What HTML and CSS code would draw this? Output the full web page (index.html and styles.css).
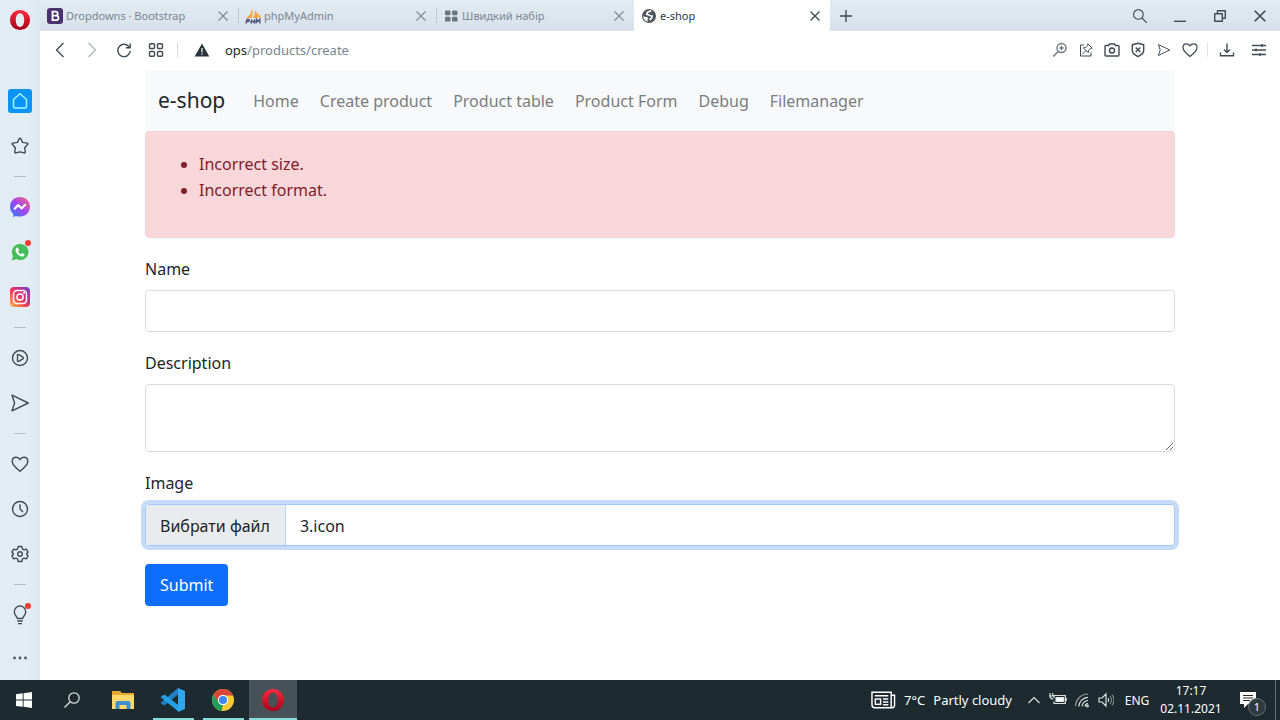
FILE: index.html
```html
<!DOCTYPE html>
<html lang="uk">
<head>
<meta charset="utf-8">
<meta name="viewport" content="width=device-width, initial-scale=1">
<title>e-shop</title>
<link rel="stylesheet" href="styles.css">
</head>
<body>
<svg class="defs" aria-hidden="true">
  <defs>
    <linearGradient id="operaRed" x1="0" y1="0" x2="0" y2="1"><stop offset="0" stop-color="#ff2b3c"/><stop offset="1" stop-color="#a7001c"/></linearGradient>
    <linearGradient id="messengerFill" x1="0" y1="1" x2="1" y2="0"><stop offset="0" stop-color="#2484ff"/><stop offset=".5" stop-color="#a345f5"/><stop offset="1" stop-color="#ff6a70"/></linearGradient>
    <linearGradient id="instaFill" x1="0" y1="1" x2="1" y2="0"><stop offset="0" stop-color="#ffc34d"/><stop offset=".4" stop-color="#f0424f"/><stop offset=".7" stop-color="#c42d91"/><stop offset="1" stop-color="#5b4fd6"/></linearGradient>
    <symbol id="close" viewBox="0 0 12 12"><path d="M1.500 1.500l9 9M10.500 1.500l-9 9"/></symbol>
    <symbol id="opera" viewBox="0 0 24 24"><path fill="url(#operaRed)" fill-rule="evenodd" d="M12 1a11 11 0 1 0 0 22a11 11 0 1 0 0-22zM12 4.500c3 0 4.600 3.300 4.600 7.500s-1.600 7.500-4.600 7.500s-4.600-3.300-4.600-7.500S9 4.500 12 4.500z"/></symbol>
    <symbol id="heart" viewBox="0 0 20 20"><path d="M10 17.300C5.500 13.800 2.200 11 2.200 7.300C2.200 4.800 4 3.200 6.100 3.200C7.800 3.200 9.200 4.100 10 5.600C10.800 4.100 12.200 3.200 13.900 3.200C16 3.200 17.800 4.800 17.800 7.300C17.800 11 14.500 13.800 10 17.300z"/></symbol>
    <symbol id="send" viewBox="0 0 20 20"><path d="M2 2.200L18.300 10L2 17.800L4.600 10z"/></symbol>
    <symbol id="magnifier" viewBox="0 0 20 20"><circle cx="8" cy="8" r="6"/><path d="M12.500 12.500l6 6"/></symbol>
  </defs>
</svg>

<div class="desktop">
  <div class="browser">
    <aside class="sidebar">
      <button class="logo" aria-label="Opera"><svg class="i22"><use href="#opera"/></svg></button>
      <nav class="side-items" aria-label="Sidebar">
        <button class="side-btn" aria-label="Home"><svg viewBox="0 0 24 24" class="i24"><rect width="24" height="24" rx="3" fill="#0a94f6"/><path d="M5.500 10.500L12 4.800l6.500 5.700v7a1.500 1.500 0 0 1-1.500 1.500H7a1.500 1.500 0 0 1-1.500-1.500z" fill="none" stroke="#a6f4ff" stroke-width="1.500"/></svg></button>
        <button class="side-btn" aria-label="Bookmarks"><svg viewBox="0 0 20 20" class="line i20"><path d="M10 2.200q.6 0 .9.700l1.700 3.500 4.500.7q1.300.3.500 1.400l-2.900 3.200.5 4.300q0 1.200-1.200.9L10 15.800l-4 1.100q-1.200.3-1.200-.9l.5-4.300-2.900-3.200q-.8-1.100.5-1.400l4.500-.7 1.700-3.500q.3-.7.9-.7z"/></svg></button>
        <hr class="side-sep">
        <button class="side-btn" aria-label="Messenger"><svg viewBox="0 0 20 20" class="i20"><path fill="url(#messengerFill)" d="M10 0C4.300 0 0 4.100 0 9.700c0 3 1.200 5.500 3.200 7.200L3.300 20l2.700-1.100c1.200.4 2.600.6 4 .6c5.700 0 10-4.100 10-9.800S15.700 0 10 0z"/><path fill="none" stroke="#fff" stroke-width="2.200" d="M4.200 12.300L8 8.200l3.600 3 4.200-4"/></svg></button>
        <button class="side-btn badge" aria-label="WhatsApp"><svg viewBox="0 0 20 20" class="i20"><path fill="#42bd58" d="M10 2a8 8 0 0 0-7 12l-1.200 4.600L6.600 17A8 8 0 1 0 10 2z"/><path fill="#fff" d="M6.500 5.800l1.400-.3 1.200 2.700-1 1.200c.7 1.300 1.600 2.200 2.900 2.800l1.100-1.200 2.500 1.200c0 2.200-1.900 2.700-3.300 2.300C8.400 13.600 6 11 5.500 8.400c0-1.300.4-2.100 1-2.600z"/></svg></button>
        <button class="side-btn" aria-label="Instagram"><svg viewBox="0 0 20 20" class="i20"><rect width="20" height="20" rx="4" fill="url(#instaFill)"/><g fill="none" stroke="#fff" stroke-width="1.500"><rect x="3.500" y="3.500" width="13" height="13" rx="3.500"/><circle cx="10" cy="10" r="3.100"/></g><circle cx="14" cy="6" r="1" fill="#fff"/></svg></button>
        <hr class="side-sep">
        <button class="side-btn" aria-label="Player"><svg viewBox="0 0 20 20" class="line i20"><circle cx="10" cy="10" r="7.500"/><path d="M7.500 6.600h1.300L13.200 9.300v1.400L8.800 13.400H7.500z"/></svg></button>
        <button class="side-btn" aria-label="My Flow"><svg class="line i20"><use href="#send"/></svg></button>
        <hr class="side-sep">
        <button class="side-btn" aria-label="Favourites"><svg class="line i20"><use href="#heart"/></svg></button>
        <button class="side-btn" aria-label="History"><svg viewBox="0 0 20 20" class="line i20"><circle cx="10" cy="10" r="7.500"/><path d="M10 5.200V10l3 3"/></svg></button>
        <button class="side-btn" aria-label="Settings"><svg viewBox="0 0 20 20" class="line i20"><path d="M8.200 2.500h3.600l.6 2.400 1.500.9 2.400-.7 1.800 3-1.700 1.800 1.700 1.900-1.800 3-2.400-.7-1.500.9-.6 2.500H8.200L7.600 15l-1.500-.9-2.400.7-1.800-3 1.700-1.900L1.900 8.100l1.800-3 2.400.7 1.500-.9z"/><circle cx="10" cy="10" r="2.300"/></svg></button>
        <hr class="side-sep">
        <button class="side-btn badge" aria-label="Tips"><svg viewBox="0 0 20 20" class="line i20"><path d="M7.300 13.500C7.300 11.500 4.300 10.500 4.300 6.700a5.700 5.700 0 0 1 11.400 0c0 3.800-3 4.800-3 6.800zM7.300 16h5.400M8 18.600h4"/></svg></button>
        <button class="side-btn more" aria-label="More"><svg viewBox="0 0 20 20" class="i20" fill="#4c555c"><circle cx="4.500" cy="10" r="1.400"/><circle cx="10" cy="10" r="1.400"/><circle cx="15.500" cy="10" r="1.400"/></svg></button>
      </nav>
    </aside>

    <div class="window">
      <header class="tabbar">
        <div class="tab">
          <svg viewBox="0 0 16 16" class="i16"><rect width="16" height="16" rx="3" fill="#4b3070"/><path fill="none" stroke="#fff" stroke-width="1.800" d="M5.500 3.700h3.200a2 2 0 0 1 0 4H5.500zM5.500 7.700h3.700a2.200 2.200 0 0 1 0 4.500H5.500z"/></svg>
          <span class="tab-title">Dropdowns · Bootstrap</span>
          <button class="tab-close" aria-label="Close tab"><svg class="line i12"><use href="#close"/></svg></button>
        </div>
        <div class="tab">
          <svg viewBox="0 0 16 16" class="i16"><path fill="#f5a338" d="M6.500 0C7 4 5.500 7 1.500 10h5C8 6 8 3 6.500 0zM9.500 2c2.500 2 4 5 4 8H7.800c2-2.500 2.500-5 1.700-8zM13 5c1.700 1.500 2.500 3 2.800 5h-1.600z"/><path fill="none" stroke="#4c5279" stroke-width="1.400" d="M1 15.500l1-4h2q1 1.200-.5 2h-2M6 15.500l.8-4M9 15.500l.8-4M6.500 13.500h3M11 15.500l.5-4 1.300 2 2-2v4"/></svg>
          <span class="tab-title">phpMyAdmin</span>
          <button class="tab-close" aria-label="Close tab"><svg class="line i12"><use href="#close"/></svg></button>
        </div>
        <div class="tab">
          <svg viewBox="0 0 16 16" class="i16" fill="#6b757d"><rect x="2" y="2.500" width="5.500" height="4.800" rx="1.200"/><rect x="9" y="2.500" width="5.500" height="4.800" rx="1.200"/><rect x="2" y="8.800" width="5.500" height="4.800" rx="1.200"/><rect x="9" y="8.800" width="5.500" height="4.800" rx="1.200"/></svg>
          <span class="tab-title">Швидкий набір</span>
          <button class="tab-close" aria-label="Close tab"><svg class="line i12"><use href="#close"/></svg></button>
        </div>
        <div class="tab active">
          <svg viewBox="0 0 16 16" class="i16"><circle cx="8" cy="8" r="7" fill="#50565b"/><path fill="none" stroke="#fff" stroke-width="1.700" stroke-linejoin="round" d="M10.200 2.800L6.500 4.300 5.700 6.300 9 7.500l2 .3-.3 2.200-2.200 1.800"/><path fill="#fff" d="M2 8.500l4 .4 1.300 1.300-.8 1.300v2.200C4.200 13 2.400 11 2 8.500z"/></svg>
          <span class="tab-title">e-shop</span>
          <button class="tab-close" aria-label="Close tab"><svg class="line i12"><use href="#close"/></svg></button>
        </div>
        <button class="new-tab" aria-label="New tab"><svg viewBox="0 0 12 12" class="line i12"><path d="M6 0v12M0 6h12"/></svg></button>
        <div class="window-controls">
          <button aria-label="Search tabs"><svg class="line i16"><use href="#magnifier"/></svg></button>
          <button aria-label="Minimize"><svg viewBox="0 0 12 12" class="line i12"><path d="M0 11.300h12"/></svg></button>
          <button aria-label="Restore"><svg viewBox="0 0 12 12" class="line i12"><path d="M.7 3.700h7.600v7.600H.7zM3.500 3.500V.7h7.800v7.600H8.500"/></svg></button>
          <button aria-label="Close"><svg class="line i14"><use href="#close"/></svg></button>
        </div>
      </header>

      <div class="addressbar">
        <div class="nav-buttons">
          <button aria-label="Back"><svg viewBox="0 0 16 16" class="line i16"><path d="M11.500 1L4.500 8l7 7"/></svg></button>
          <button aria-label="Forward" disabled><svg viewBox="0 0 16 16" class="line i16"><path d="M4.500 1l7 7-7 7"/></svg></button>
          <button aria-label="Reload"><svg viewBox="0 0 16 16" class="line i16"><path d="M13.500 5.500A6.200 6.200 0 1 0 14.200 9M14.200 1.500v4.300H9.800"/></svg></button>
          <button aria-label="Speed Dial"><svg viewBox="0 0 16 16" class="line i16"><rect x="1.500" y="1.700" width="5" height="4.800" rx="1"/><rect x="9.500" y="1.700" width="5" height="4.800" rx="1"/><rect x="1.500" y="9.500" width="5" height="4.800" rx="1"/><rect x="9.500" y="9.500" width="5" height="4.800" rx="1"/></svg></button>
        </div>
        <button class="warn" aria-label="Not secure"><svg viewBox="0 0 16 16" class="i16"><path fill="#28323a" d="M8 1.500L15.300 14.500H.7z"/><path stroke="#fff" stroke-width="1.200" d="M8 6v4.500M8 11.500v1.300"/></svg></button>
        <div class="url">ops<span>/products/create</span></div>
        <div class="page-actions">
          <button aria-label="Zoom"><svg viewBox="0 0 16 16" class="line i16 faint"><circle cx="9.500" cy="6" r="4.500"/><path d="M6.300 9.300L1.300 14.500M7.300 6h4.400M9.500 3.800v4.400"/></svg></button>
          <button aria-label="Edit page"><svg viewBox="0 0 16 16" class="line thin i16"><path d="M6 3H2.500v11H13v-3.500M4.500 12L8 8.500M9.800 1.800l4.400 4.400-1.700.1-2 2-.3 2.400-4.900-4.900 2.400-.3 2-2z"/></svg></button>
          <button aria-label="Snapshot"><svg viewBox="0 0 16 16" class="line i16"><path d="M1 4.500q0-1 1-1h2.500L5.500 2h5l1 1.500H14q1 0 1 1V13q0 1-1 1H2q-1 0-1-1z"/><circle cx="8" cy="8.500" r="2.500"/></svg></button>
          <button aria-label="Ad blocker"><svg viewBox="0 0 16 16" class="line i16"><path d="M8 1.300l5.700 1.500v5.700q0 3.500-5.700 6q-5.700-2.500-5.700-6V2.800zM5.700 5.500l4.600 4.600M10.300 5.500l-4.600 4.600"/></svg></button>
          <button aria-label="Send to My Flow"><svg class="line i14"><use href="#send"/></svg></button>
          <button aria-label="Save to bookmarks"><svg class="line i18"><use href="#heart"/></svg></button>
        </div>
        <div class="menu-actions">
          <button aria-label="Downloads"><svg viewBox="0 0 16 16" class="line i16"><path d="M8 1.500v8.800M5 7.500l3 3 3-3M1.500 10.500v3.300h13v-3.300"/></svg></button>
          <button aria-label="Easy setup"><svg viewBox="0 0 16 16" class="line i16"><path d="M1 3.500h14M1 8h14M1 12.500h14M11 2v3M5 6.500v3M9 11v3"/></svg></button>
        </div>
      </div>

      <main class="page">
        <nav class="navbar">
          <a class="brand" href="#">e-shop</a>
          <a href="#">Home</a>
          <a href="#">Create product</a>
          <a href="#">Product table</a>
          <a href="#">Product Form</a>
          <a href="#">Debug</a>
          <a href="#">Filemanager</a>
        </nav>
        <div class="alert" role="alert">
          <ul>
            <li>Incorrect size.</li>
            <li>Incorrect format.</li>
          </ul>
        </div>
        <form class="form">
          <div class="field">
            <label for="name">Name</label>
            <input class="control" id="name" type="text">
          </div>
          <div class="field">
            <label for="description">Description</label>
            <textarea class="control" id="description"></textarea>
          </div>
          <div class="field">
            <label for="image">Image</label>
            <input class="file-native" id="image" type="file">
            <label class="file-control" for="image"><span class="file-button">Вибрати файл</span><span class="file-name">3.icon</span></label>
          </div>
          <button class="submit" type="submit">Submit</button>
        </form>
      </main>
    </div>
  </div>

  <footer class="taskbar">
    <button class="task" aria-label="Start"><svg viewBox="0 0 16 16" class="i16" fill="#fff"><path d="M0 2.200L6.700 1.300v6.300H0zM7.600 1.200L16 0v7.600H7.600zM0 8.500h6.700v6.300L0 13.900zM7.600 8.500H16V16l-8.400-1.200z"/></svg></button>
    <button class="task" aria-label="Search"><svg viewBox="0 0 16 16" class="i16" fill="none" stroke="#d5dadc" stroke-width="1.300"><circle cx="10" cy="6" r="5.200"/><path d="M6.200 9.800L.5 15.500"/></svg></button>
    <div class="pinned">
      <button class="task" aria-label="File Explorer"><svg viewBox="0 0 24 24" class="i24"><path fill="#e5a92f" d="M1 3h8l2 2h12v3H1z"/><path fill="#ffd96b" d="M1 7h22v14H1z"/><path fill="#3d91d1" d="M4.500 21v-6q0-2 2-2h11q2 0 2 2v6h-4v-4h-7v4z"/></svg></button>
      <button class="task open" aria-label="Visual Studio Code"><svg viewBox="0 0 24 24" class="i24"><path fill="#1e7fc5" d="M17 0v6.500L3.500 17.500 0 15.500v-1L17 0z"/><path fill="#259fe8" d="M0 8.500l3.500-2L18 17.500V24L0 9.500z"/><path fill="#2fa7ee" d="M17 0l7 3v18l-7 3z"/></svg></button>
      <button class="task open" aria-label="Chrome"><svg viewBox="0 0 24 24" class="i24"><circle cx="12" cy="12" r="11" fill="#f8c931"/><path fill="#dc4437" d="M2.500 6.500a11 11 0 0 1 19 0l.5 1H12L7.500 14.500z"/><path fill="#249d58" d="M2.500 6.500L7.700 14.500 12 17l-1.500 6A11 11 0 0 1 2.500 6.500z"/><circle cx="12" cy="12" r="5.200" fill="#fff"/><circle cx="12" cy="12" r="4.100" fill="#4286f4"/></svg></button>
      <button class="task open current" aria-label="Opera"><svg class="i24"><use href="#opera"/></svg></button>
    </div>
    <div class="tray">
      <button class="weather"><svg viewBox="0 0 26 18" class="news" fill="none" stroke="#fff" stroke-width="1.500"><path d="M1 1h20v16H4q-3 0-3-3zM21 4h3.500v10.500q0 2.500-2.500 2.500h-1M4 4.500h14M12.500 8h5.500M12.500 11h5.500M12.500 14h5.500"/><rect x="4.500" y="8" width="5.500" height="5.500"/></svg><span>7°C</span><span>Partly cloudy</span></button>
      <div class="tray-icons">
        <button aria-label="Hidden icons"><svg viewBox="0 0 16 16" class="i16 tray-line"><path d="M2.500 11L8 5.500l5.500 5.500"/></svg></button>
        <button aria-label="Battery"><svg viewBox="0 0 18 16" class="i18 tray-line"><path d="M5 6V3.500h11.300v8H5V9.500M17.200 6v3M0 4h4.500M1 1v3M3.700 1v3M1 4q0 3 3.500 3"/><path fill="#fff" d="M7 5.500h7.500v4H7z"/></svg></button>
        <button aria-label="Network"><svg viewBox="0 0 16 16" class="i16 tray-line"><path opacity=".65" d="M1.500 14A12.500 12.500 0 0 1 14 2"/><path d="M4.800 14.500A9.500 9.500 0 0 1 14 5.300M8 14.500a6.200 6.200 0 0 1 6-6M11 14.500a3.200 3.200 0 0 1 3-3"/><circle cx="13.500" cy="14" r=".8"/></svg></button>
        <button aria-label="Volume"><svg viewBox="0 0 16 16" class="i16 tray-line"><path d="M1 6h3l4-4v12l-4-4H1zM10 6q1.500 2 0 4"/><path opacity=".5" d="M12 4q3 4 0 8M14 2.500q4 5.500 0 11"/></svg></button>
      </div>
      <button class="lang">ENG</button>
      <button class="clock"><span>17:17</span><span>02.11.2021</span></button>
      <button class="notices" aria-label="Notifications"><svg viewBox="0 0 18 18" class="i18"><path fill="#fff" d="M1 1h16v12H9l-4 4v-4H1z"/><path stroke="#1d2a2f" stroke-width="1.200" d="M4 4.500h10M4 7h10M4 9.500h7"/></svg><span class="count">1</span></button>
    </div>
  </footer>
</div>
</body>
</html>
```

FILE: styles.css
```css
* { box-sizing: border-box; }
body {
  margin: 0;
  font-family: "Noto Sans", "Open Sans", sans-serif;
  font-size: 12px;
  color: #212529;
  background: #fff;
}
button {
  font: inherit;
  color: inherit;
  background: none;
  border: 0;
  padding: 0;
  display: flex;
  align-items: center;
  justify-content: center;
}
svg { display: block; flex: none; }
.defs { position: absolute; width: 0; height: 0; }
.i12 { width: 12px; height: 12px; }
.i14 { width: 14px; height: 14px; }
.i16 { width: 16px; height: 16px; }
.i18 { width: 18px; height: 18px; }
.i20 { width: 20px; height: 20px; }
.i22 { width: 22px; height: 22px; }
.i24 { width: 24px; height: 24px; }
.line { fill: none; stroke: #414b53; stroke-width: 1.4; stroke-linejoin: round; }
.thin { stroke-width: 1; }

.desktop { min-height: 100vh; display: flex; flex-direction: column; }
.browser { flex: 1; display: flex; }

.sidebar {
  width: 40px;
  flex: none;
  background: linear-gradient(90deg, #e2ecf3 70%, #dde6ee);
}
.logo { width: 100%; height: 40px; }
.side-items { padding-top: 38px; }
.side-btn { width: 100%; height: 45px; position: relative; }
.more { height: 42px; }
.side-sep {
  width: 12px;
  height: 1px;
  margin: 8px auto 7px;
  border: 0;
  background: #b4bec6;
}
.badge::after {
  content: "";
  position: absolute;
  right: 9px;
  top: 11px;
  width: 6px;
  height: 6px;
  border-radius: 50%;
  background: #ee3a34;
}

.window { flex: 1; min-width: 0; display: flex; flex-direction: column; }
.tabbar {
  height: 31px;
  display: flex;
  align-items: stretch;
  background: linear-gradient(#e2eaf2, #d8e0e9);
}
.tab {
  flex: 0 1 198px;
  min-width: 0;
  display: flex;
  align-items: center;
  gap: 3px;
  padding: 0 8px 0 7px;
  font-size: 11px;
  color: #7b8690;
}
.tab + .tab:not(.active) { background: linear-gradient(#c0c8d0, #c0c8d0) 0 50% / 1px 15px no-repeat; }
.tab-title { flex: 1; white-space: nowrap; overflow: hidden; }
.tab-close { width: 14px; height: 16px; }
.tab:not(.active) .line { stroke: #7e8991; stroke-width: 1.1; }
.tab.active { flex-basis: 196px; background: #fff; color: #30383e; }
.new-tab { width: 32px; }
.window-controls { margin-left: auto; display: flex; }
.window-controls button { width: 40px; }

.addressbar { height: 39px; padding-bottom: 1px; display: flex; align-items: center; }
.nav-buttons { display: flex; padding-left: 4px; }
.nav-buttons button { width: 32px; height: 24px; }
.nav-buttons button:disabled { opacity: .4; }
.warn {
  width: 48px;
  height: 14px;
  margin-left: 5px;
  border-left: 1px solid #d5d9dc;
}
.url { font-size: 13px; color: #20282e; flex: 1; }
.url span { color: #7a868e; }
.page-actions { display: flex; padding-right: 4px; border-right: 1px solid #dfe3e6; }
.page-actions button { width: 26px; height: 14px; }
.faint { opacity: .75; }
.menu-actions { display: flex; padding-right: 5px; padding-left: 3px; }
.menu-actions button { width: 32px; }

.page {
  width: calc(100% - 32px);
  max-width: 1030px;
  margin: 0 auto;
  font-size: 16px;
}
.navbar {
  display: flex;
  flex-wrap: wrap;
  align-items: center;
  gap: 21px;
  padding: 14px 13px;
  background: #f8f9fa;
  line-height: 26px;
}
.navbar a { color: #7b7d7e; text-decoration: none; }
.navbar .brand {
  color: #212529;
  font-size: 21px;
  line-height: 33px;
  margin-right: 7px;
}
.alert {
  padding: 19px 17px 18px;
  border: 1px solid #f5d2d6;
  border-radius: 4px;
  background: #f8d7da;
  color: #842029;
  line-height: 26px;
}
.alert ul { margin: 0 0 16px; padding-left: 36px; }
.form { padding-top: 18px; line-height: 26px; }
.field { margin-bottom: 18px; position: relative; }
.field label { display: block; margin-bottom: 8px; }
.control {
  display: block;
  width: 100%;
  height: 42px;
  padding: 7px 13px;
  border: 1px solid #dadde0;
  border-radius: 4px;
  background: #fff;
  font: inherit;
  color: inherit;
}
textarea.control { height: 68px; resize: vertical; }
.file-native { position: absolute; opacity: 0; width: 1px; height: 1px; }
.field .file-control {
  display: flex;
  height: 42px;
  margin: 0;
  border: 1px solid #a3c5f9;
  border-radius: 4px;
  box-shadow: 0 0 0 4px #c6dafa;
  overflow: hidden;
  line-height: 42px;
}
.file-button { padding: 0 15px 0 14px; background: #e9ecef; border-right: 1px solid #b9d2f5; }
.file-name { padding: 0 14px; }
.submit {
  height: 42px;
  padding: 0 15px;
  border-radius: 4px;
  background: #0d6efd;
  color: #fff;
}

.taskbar {
  height: 40px;
  display: flex;
  background: #1d2a2f;
  color: #fff;
}
.task { width: 48px; height: 40px; }
.pinned { display: flex; gap: 2px; margin-left: 3px; }
.open { background: linear-gradient(#86dcdd, #86dcdd) 50% 100% / 41px 2px no-repeat; }
.current { background: linear-gradient(#86dcdd, #86dcdd) 0 100% / 100% 2px no-repeat #465257; }
.tray { margin-left: auto; display: flex; align-items: center; }
.weather { gap: 8px; font-size: 13px; margin-right: 10px; }
.news { width: 25px; height: 18px; }
.tray-icons { display: flex; }
.tray-icons button { width: 24px; height: 24px; }
.tray-line { fill: none; stroke: #dbe1e3; stroke-width: 1.2; }
.lang { width: 38px; }
.clock { width: 70px; flex-direction: column; line-height: 18px; }
.notices { width: 50px; height: 40px; margin-right: 4px; padding-right: 6px; position: relative; border-right: 1px solid #657076; }
.count {
  position: absolute;
  left: 22px;
  top: 18px;
  width: 18px;
  height: 18px;
  border: 1px solid #657076;
  border-radius: 50%;
  background: #2f3a3f;
  font-size: 11px;
  line-height: 16px;
}
```
